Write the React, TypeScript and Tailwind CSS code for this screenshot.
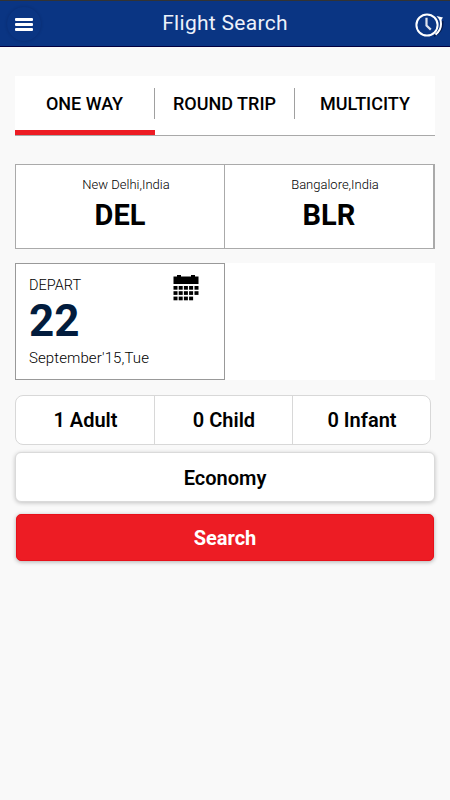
const TABS = ['ONE WAY', 'ROUND TRIP', 'MULTICITY'];

const AIRPORTS = [
  { city: 'New Delhi,India', code: 'DEL' },
  { city: 'Bangalore,India', code: 'BLR' },
];

const PASSENGERS = ['1 Adult', '0 Child', '0 Infant'];

function HistoryIcon() {
  return (
    <svg width="30" height="26" viewBox="0 0 30 26" fill="none">
      {/* shadow under the arrow */}
      <path d="M19 24.2 Q28 20.5 27.8 9" stroke="#041a4d" strokeWidth="1.6" />
      <circle cx="12" cy="13" r="10.6" stroke="#fff" strokeWidth="2" />
      <path d="M11.5 5.8 V13.5 L15.8 17.6" stroke="#dfe3ee" strokeWidth="2.2" />
      <path d="M20.5 22.6 Q26 18.5 26 12 Q26 9.5 25.2 7" stroke="#fff" strokeWidth="2" />
      <path d="M21.5 4 L28 5.5 L25.5 9 Z" fill="#fff" />
    </svg>
  );
}

function CalendarIcon() {
  return (
    <svg width="26" height="26" viewBox="0 0 26 26" fill="#000">
      <rect x="0.5" y="1.5" width="25" height="7.5" />
      <rect x="4" y="0" width="4" height="3" />
      <rect x="18" y="0" width="4" height="3" />
      {[11, 16.2, 21.6].map((y, row) =>
        [0.5, 5.7, 10.9, 16.1, 21.5]
          .slice(0, row === 2 ? 4 : 5)
          .map((x) => <rect key={`${x}-${y}`} x={x} y={y} width="4" height="3.7" />)
      )}
    </svg>
  );
}

export default function App() {
  return (
    <div className="h-[800px] w-[450px] overflow-hidden bg-[#f9f9f9] font-['Roboto',sans-serif] text-black">
      <header className="flex h-[47px] items-center justify-between border-t border-b border-t-[#333] border-b-[#02003f] bg-[#0a3583] pl-[7px] pr-[5px]">
        <button className="flex h-[34px] w-[34px] flex-col items-center justify-center gap-[2px] rounded-full pt-[2px] shadow-[0_0_3px_rgba(0,0,40,0.22)]">
          <span className="h-[3px] w-[18px] rounded-[1px] bg-white" />
          <span className="h-[3px] w-[18px] rounded-[1px] bg-white" />
          <span className="h-[3px] w-[18px] rounded-[1px] bg-white" />
        </button>
        <h1 className="mr-[6px] pb-[2px] text-[21px] leading-[26px] tracking-[0.3px] text-[#edf1fa]">Flight Search</h1>
        <button className="pt-[3px]">
          <HistoryIcon />
        </button>
      </header>

      <main className="px-[15px] pt-[29px]">
        <nav className="flex h-[60px] border-b border-[#a9a9a9] bg-white">
          {TABS.map((tab, i) => (
            <div key={tab} className="flex flex-1 flex-col">
              <div className="flex h-[54px] items-center">
                <span className="flex-1 text-center text-[18px] font-medium">{tab}</span>
                {i < TABS.length - 1 && <span className="h-[31px] w-px bg-[#a0a0a0]" />}
              </div>
              {i === 0 && <div className="h-[5px] bg-[#ed1c24]" />}
            </div>
          ))}
        </nav>

        <section className="mt-7 flex h-[85px] border border-r-2 border-[#aaa] bg-white">
          {AIRPORTS.map((airport, i) => (
            <div
              key={airport.code}
              className={`flex flex-1 flex-col items-center pt-[11px] ${i === 0 ? 'border-r border-[#aaa]' : ''}`}
            >
              <span className="pl-[12px] text-[13px] leading-[18px] font-light text-black">{airport.city}</span>
              <span className="text-[29px] leading-[42px] font-bold">{airport.code}</span>
            </div>
          ))}
        </section>

        <section className="mt-[14px] h-[117px] bg-white">
          <div className="flex h-full w-[210px] justify-between border border-[#999] pl-[13px] pr-[25px]">
            <div className="pt-[13px]">
              <p className="text-[14.5px] leading-[18px] font-light text-black">DEPART</p>
              <p className="text-[44px] leading-[52px] font-bold text-[#021c3d]">22</p>
              <p className="text-[15px] leading-[22px] font-light tracking-[0.1px] text-black">September'15,Tue</p>
            </div>
            <div className="pt-[11px]">
              <CalendarIcon />
            </div>
          </div>
        </section>

        <section className="mt-[15px] flex h-[50px] w-[416px] rounded-lg border border-[#d8d8d8] bg-white">
          {PASSENGERS.map((label) => (
            <button
              key={label}
              className="flex-1 border-r border-[#d8d8d8] pl-px text-[20px] font-semibold first:flex-none first:w-[139px] last:border-r-0"
            >
              {label}
            </button>
          ))}
        </section>

        <button className="mt-[7px] flex h-[50px] w-full items-center justify-center rounded-md border border-[#dadada] bg-white pt-px text-[20px] font-semibold shadow-[0_1px_4px_rgba(0,0,0,0.22)]">
          Economy
        </button>

        <button className="mx-px mt-3 flex h-[47px] w-[418px] items-center justify-center rounded-[5px] border border-[#e8101a] bg-[#ed1c24] text-[20px] font-bold text-white shadow-[0_1px_4px_rgba(0,0,0,0.3)]">
          Search
        </button>
      </main>
    </div>
  );
}
